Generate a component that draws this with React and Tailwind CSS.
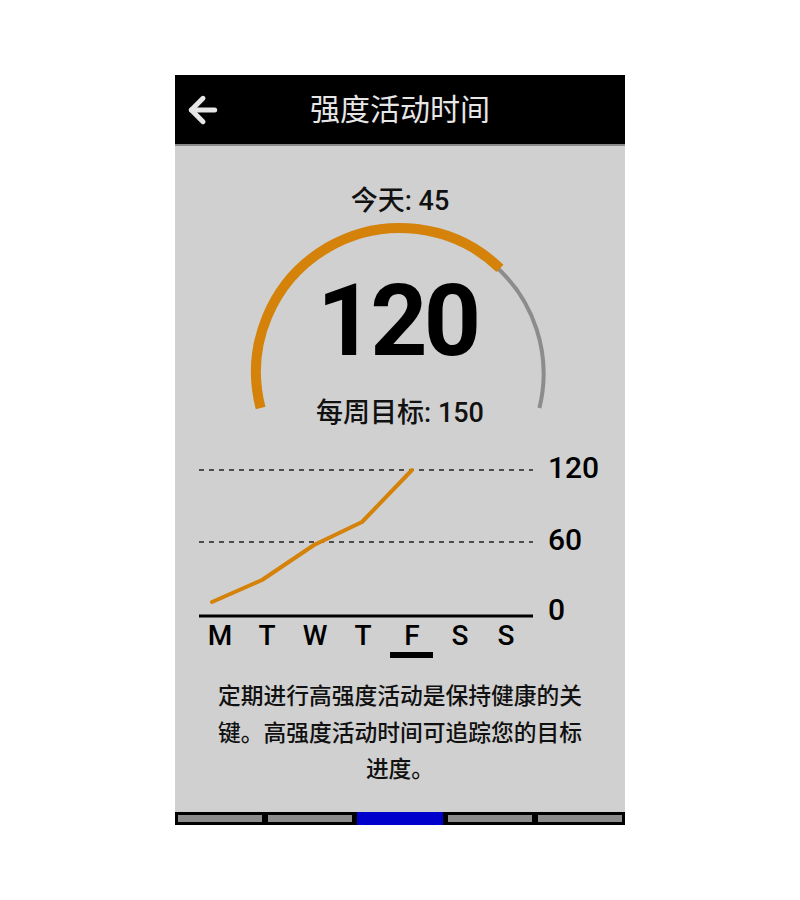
import { ArrowLeft } from 'lucide-react';

const font = { fontFamily: 'Roboto, "Noto Sans CJK SC", sans-serif' };

const days = [
  { d: 'M', x: 45 },
  { d: 'T', x: 92 },
  { d: 'W', x: 140 },
  { d: 'T', x: 188 },
  { d: 'F', x: 237 },
  { d: 'S', x: 285 },
  { d: 'S', x: 331 },
];

const points = '37,167 87,145 139,110 187,87 237,35';

const Gauge = () => (
  <div className="relative h-[289px] flex flex-col items-center">
    <svg className="absolute inset-0" width="450" height="289" viewBox="0 0 450 289">
      <path d="M 318 118 A 144 144 0 0 1 364.4 262" fill="none" stroke="#8c8c8c" strokeWidth="4" />
      <path d="M 85.6 262 A 144 144 0 0 1 325 122.4" fill="none" stroke="#d4820a" strokeWidth="10" />
    </svg>
    <p className="relative mt-[40px] text-[27px] leading-[30px] font-medium text-[#111]">今天: 45</p>
    <p className="relative mt-[55px] pr-[6px] text-[100px] leading-[100px] font-bold tracking-[-4px] text-black">120</p>
    <p className="relative mt-[27px] text-[27px] leading-[30px] font-medium text-[#111]">每周目标: 150</p>
  </div>
);

const Chart = () => (
  <svg width="450" height="240" viewBox="0 0 450 240" style={font}>
    <line x1="24" y1="35" x2="358" y2="35" stroke="#222" strokeWidth="1.3" strokeDasharray="5 5" />
    <line x1="24" y1="107" x2="358" y2="107" stroke="#222" strokeWidth="1.3" strokeDasharray="5 5" />
    <line x1="24" y1="181" x2="358" y2="181" stroke="#000" strokeWidth="3" />
    <polyline points={points} fill="none" stroke="#d4820a" strokeWidth="4" strokeLinejoin="round" strokeLinecap="round" />
    <text x="373" y="43" fontSize="30" fontWeight="500" fill="#000">120</text>
    <text x="373" y="115" fontSize="30" fontWeight="500" fill="#000">60</text>
    <text x="373" y="185" fontSize="30" fontWeight="500" fill="#000">0</text>
    {days.map((day, i) => (
      <text key={i} x={day.x} y="210" fontSize="28" fontWeight="500" textAnchor="middle" fill="#000">{day.d}</text>
    ))}
    <rect x="215" y="217" width="43" height="6" fill="#000" />
  </svg>
);

const Pager = () => (
  <div className="h-[13px] bg-black flex">
    {[0, 1, 2, 3, 4].map(i => (
      <div key={i} className="flex-1 p-[3px]">
        {i === 2
          ? <div className="-m-[3px] mx-[-1px] h-[13px] bg-[#0000cc]" />
          : <div className="h-full bg-[#8c8c8c]" />}
      </div>
    ))}
  </div>
);

export default function App() {
  return (
    <div className="min-h-[900px] bg-white flex justify-center pt-[75px]" style={font}>
      <div className="w-[450px] h-[750px] flex flex-col bg-[#d0d0d0]">
        <div className="h-[71px] bg-black border-b-2 border-[#8a8a8a] flex items-center relative">
          <ArrowLeft className="absolute left-[8px] top-[15px] text-[#e6e6e6]" size={40} strokeWidth={3} />
          <p className="w-full text-center text-[30px] leading-[36px] text-[#e6e6e6]">强度活动时间</p>
        </div>
        <Gauge />
        <Chart />
        <div className="flex-1 flex justify-center pt-[4px]">
          <p className="w-[372px] text-center text-[22.75px] leading-[36.5px] font-medium text-[#111]">
            定期进行高强度活动是保持健康的关键。高强度活动时间可追踪您的目标进度。
          </p>
        </div>
        <Pager />
      </div>
    </div>
  );
}
